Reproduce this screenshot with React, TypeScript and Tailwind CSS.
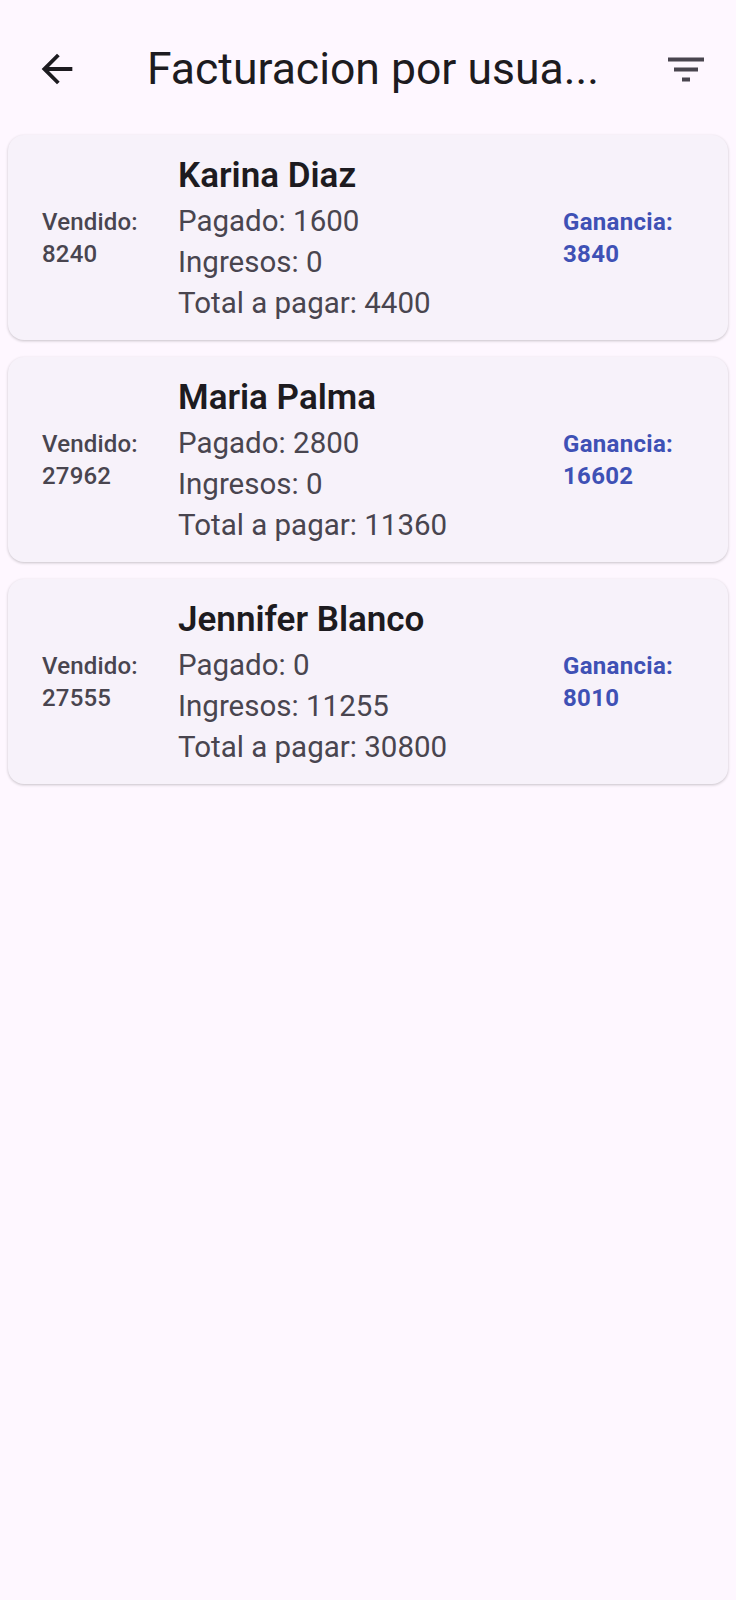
import React from "react";

const rows = [
  { name: "Karina Diaz", vendido: "8240", pagado: "1600", ingresos: "0", total: "4400", ganancia: "3840" },
  { name: "Maria Palma", vendido: "27962", pagado: "2800", ingresos: "0", total: "11360", ganancia: "16602" },
  { name: "Jennifer Blanco", vendido: "27555", pagado: "0", ingresos: "11255", total: "30800", ganancia: "8010" },
];

const ArrowBack: React.FC = () => (
  <svg width="46" height="46" viewBox="0 0 24 24" fill="#1d1b20">
    <path d="M20 11H7.83l5.59-5.59L12 4l-8 8 8 8 1.41-1.41L7.83 13H20v-2z" />
  </svg>
);

const FilterList: React.FC = () => (
  <svg width="49" height="49" viewBox="0 0 24 24" fill="#49454f">
    <path d="M10 18h4v-2h-4v2zM3 6v2h18V6H3zm3 7h12v-2H6v2z" />
  </svg>
);

export default function App() {
  return (
    <div className="min-h-[1600px] w-full bg-[#fef7ff] font-['Roboto',sans-serif]">
      {/* App bar */}
      <header className="pt-[36px]">
        <div className="flex h-[66px] items-center">
          <button className="ml-[33px] flex h-[48px] w-[48px] items-center justify-center">
            <ArrowBack />
          </button>
          <h1 className="ml-[66px] flex-1 whitespace-nowrap text-[44.5px] leading-none text-[#1d1b20]">
            Facturacion por usua...
          </h1>
          <button className="mr-[26px] flex h-[48px] w-[48px] items-center justify-center">
            <FilterList />
          </button>
        </div>
      </header>

      {/* Cards */}
      <div className="flex flex-col gap-[17px] px-[8px] pt-[33px]">
        {rows.map((r) => (
          <div
            key={r.name}
            className="grid grid-cols-[136px_1fr_165px] items-center rounded-[16px] bg-[#f7f2fa] pl-[34px] pt-[16px] pb-[16px] shadow-[0_1px_3px_rgba(0,0,0,0.22)]"
          >
            <div className="text-[24px] font-medium leading-[32px] tracking-[0.2px] text-[#49454f]">
              <div>Vendido:</div>
              <div>{r.vendido}</div>
            </div>
            <div>
              <div className="text-[35px] font-semibold leading-[50px] text-[#1d1b20]">{r.name}</div>
              <div className="text-[29.5px] leading-[41px] text-[#49454f]">
                <div>Pagado: {r.pagado}</div>
                <div>Ingresos: {r.ingresos}</div>
                <div>Total a pagar: {r.total}</div>
              </div>
            </div>
            <div className="text-[24px] font-bold leading-[32px] tracking-[0.3px] text-[#3f51b5]">
              <div>Ganancia:</div>
              <div>{r.ganancia}</div>
            </div>
          </div>
        ))}
      </div>
    </div>
  );
}
